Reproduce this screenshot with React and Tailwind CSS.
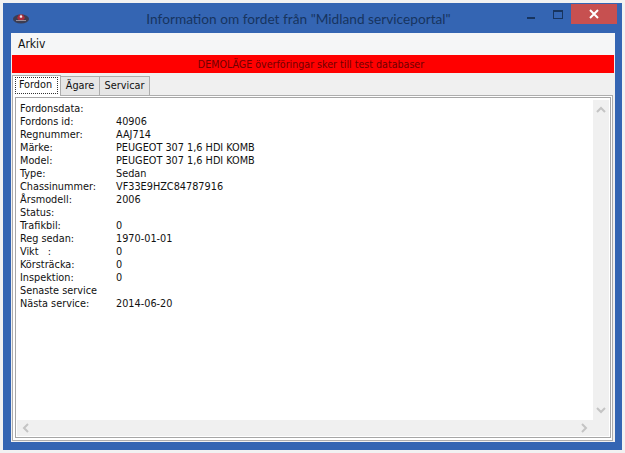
import React from "react";

const rows = [
  ["Fordonsdata:", ""],
  ["Fordons id:", "40906"],
  ["Regnummer:", "AAJ714"],
  ["Märke:", "PEUGEOT 307 1,6 HDI KOMB"],
  ["Model:", "PEUGEOT 307 1,6 HDI KOMB"],
  ["Type:", "Sedan"],
  ["Chassinummer:", "VF33E9HZC84787916"],
  ["Årsmodell:", "2006"],
  ["Status:", ""],
  ["Trafikbil:", "0"],
  ["Reg sedan:", "1970-01-01"],
  ["Vikt   :", "0"],
  ["Körsträcka:", "0"],
  ["Inspektion:", "0"],
  ["Senaste service", ""],
  ["Nästa service:", "2014-06-20"],
];

function Chevron({ d }) {
  return (
    <svg width="10" height="8" viewBox="0 0 10 8" fill="none" stroke="#c4c4c4" strokeWidth="2">
      <path d={d} />
    </svg>
  );
}

function Logo() {
  return (
    <svg width="16" height="11" viewBox="0 0 16 11">
      <ellipse cx="8" cy="6" rx="8" ry="4.6" fill="#3c3d52" />
      <path d="M4 5 L6 1.5 H10 L12 5 L10 7.5 H6 Z" fill="#a82c3c" />
      <path d="M6.5 4 L8 1.5 L9.5 4 L8 5 Z" fill="#f4eeee" />
      <path d="M3 7.5 H13" stroke="#9a8f9a" strokeWidth="1" />
    </svg>
  );
}

export default function App() {
  return (
    <div className="w-[625px] h-[453px] bg-[#f2f2f2] pt-[3px] pl-[3px] overflow-hidden font-['DejaVu_Sans_Condensed','Liberation_Sans',sans-serif]">
      <div className="w-[619px] h-[447px] bg-[#3465b3] flex flex-col pl-[8px] pr-[7px] pb-[8px]">
        <div className="h-[30px] shrink-0 flex items-start">
          <div className="mt-[10px] ml-[2px] w-[16px] shrink-0"><Logo /></div>
          <div className="flex-1 text-center text-[13.7px] leading-[20px] mt-[6px] text-[#17345f] font-['Lato',sans-serif] pl-[41px]">
            Information om fordet från "Midland serviceportal"
          </div>
          <div className="flex items-start shrink-0 -mr-[2px] mt-[1px]">
            <div className="w-[8px] h-[2px] bg-[#17345f] mt-[13px] mr-[18px]" />
            <div className="w-[8px] h-[6px] border border-[#17345f] border-t-2 mt-[6px] mr-[8px] box-content" />
            <div className="w-[46px] h-[20px] bg-[#c75050] flex items-center justify-center">
              <svg width="10" height="10" viewBox="0 0 10 10" stroke="#ffffff" strokeWidth="2"><path d="M1 1 L9 9 M9 1 L1 9" /></svg>
            </div>
          </div>
        </div>
        <div className="flex-1 flex flex-col bg-[#f0f0f0] min-h-0">
          <div className="h-[22px] bg-[#f5f6f7] text-[12px] leading-[22px] pl-[7px] text-[#111111] shrink-0">Arkiv</div>
          <div className="h-[18px] mx-[1px] pr-[4px] bg-[#ff0000] text-[10.6px] leading-[18px] text-center text-[#700000] shrink-0">
            DEMOLÄGE överföringar sker till test databaser
          </div>
          <div className="flex items-end h-[22px] pl-[1px] text-[10.8px] text-[#111111] shrink-0">
            <div className="w-[49px] h-[21px] border border-b-0 border-[#adadad] bg-white relative top-[1px] z-10 pl-[2px] pt-[1px]">
              <div className="w-[43px] h-[17px] pr-[2px] border border-dotted border-[#333333] flex items-center justify-center">Fordon</div>
            </div>
            <div className="w-[39px] h-[19px] border border-l-0 border-b-0 border-[#adadad] bg-[#e6e6e6] flex items-center justify-center">Ägare</div>
            <div className="w-[50px] h-[19px] border border-l-0 border-b-0 border-[#adadad] bg-[#e6e6e6] flex items-center justify-center">Servicar</div>
          </div>
          <div className="flex-1 min-h-0 ml-[1px] mr-[2px] mb-[1px] border border-[#adadad] bg-white pt-[1px] pl-[2px] pr-[1px] pb-[2px]">
            <div className="h-full border border-[#a6a6a6] pt-[2px] px-[1px] pb-[1px] flex flex-col">
              <div className="flex-1 min-h-0 flex">
                <div className="flex-1 pl-[3px] pt-[2px] text-[10.8px] leading-[13px] text-[#111111]">
                  {rows.map(([k, v]) => (
                    <div key={k} className="flex h-[13px]">
                      <div className="w-[96px] whitespace-pre">{k}</div>
                      <div>{v}</div>
                    </div>
                  ))}
                </div>
                <div className="w-[16px] bg-[#f0f0f0] flex flex-col justify-between items-center py-[5px]">
                  <Chevron d="M1 7 L5 3 L9 7" />
                  <Chevron d="M1 1 L5 5 L9 1" />
                </div>
              </div>
              <div className="h-[16px] bg-[#f0f0f0] flex justify-between items-center pl-[4px] pr-[20px] shrink-0">
                <svg width="8" height="10" viewBox="0 0 8 10" fill="none" stroke="#c4c4c4" strokeWidth="2"><path d="M7 1 L3 5 L7 9" /></svg>
                <svg width="8" height="10" viewBox="0 0 8 10" fill="none" stroke="#c4c4c4" strokeWidth="2"><path d="M1 1 L5 5 L1 9" /></svg>
              </div>
            </div>
          </div>
        </div>
      </div>
    </div>
  );
}
